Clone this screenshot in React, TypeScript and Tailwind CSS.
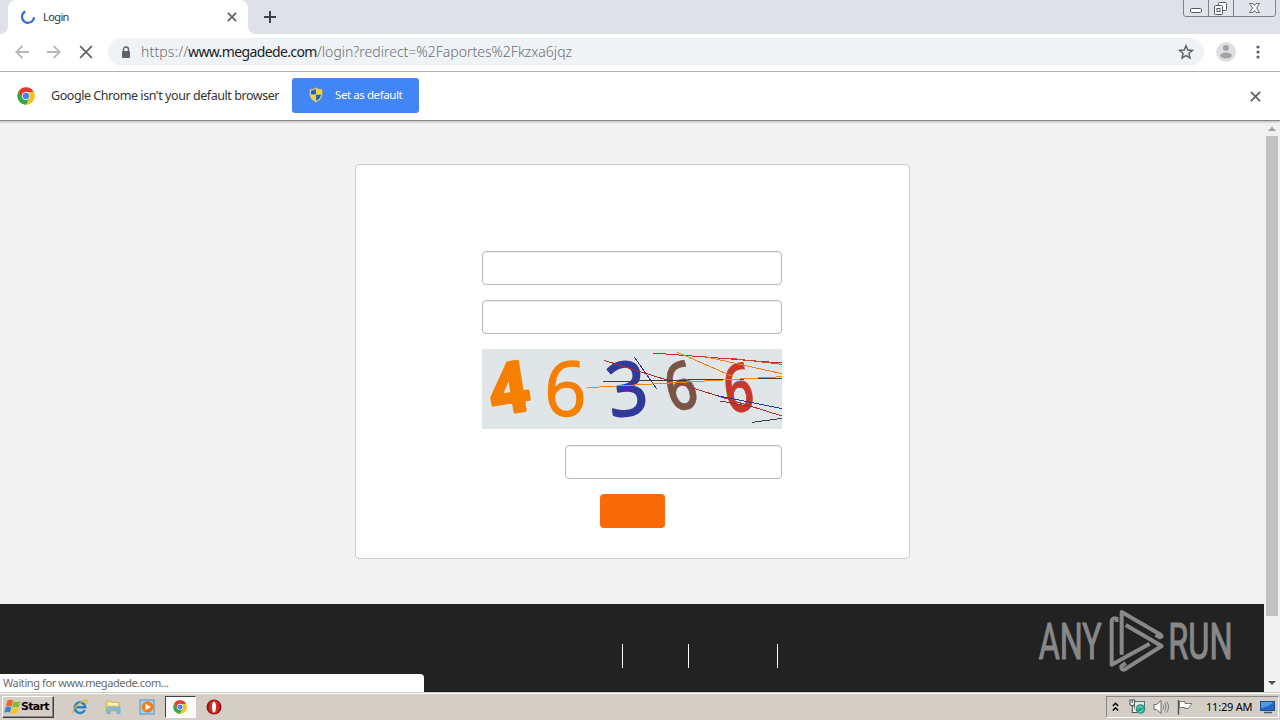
import type { ReactNode } from "react";

const uiFont = "font-['Noto_Sans','Open_Sans',sans-serif]";

const ChromeLogo = ({ size }: { size: number }) => (
    <svg width={size} height={size} viewBox="0 0 48 48">
        <circle cx="24" cy="24" r="23" fill="#fbc116" />
        <path d="M4.1 12.5 A23 23 0 0 0 24 47 L34 29.2 L24 24 L14 29.2 Z" fill="#2da94f" />
        <path d="M24 13.5 H44.5 A23 23 0 0 1 24 47 L33.5 29.5 Z" fill="#fbc116" />
        <path d="M24 13.5 H44.5 A23 23 0 0 0 4.1 12.5 L14.5 29 Z" fill="#e33b2e" />
        <circle cx="24" cy="24" r="10.8" fill="#fff" />
        <circle cx="24" cy="24" r="8.8" fill="#4a80f0" />
    </svg>
);

const Shield = () => (
    <svg width="14" height="16" viewBox="0 0 14 16">
        <path d="M7 .5 Q10 2.5 13.4 2.2 V7 Q13.4 12.5 7 15.5 Q.6 12.5 .6 7 V2.2 Q4 2.5 7 .5Z" fill="#d9d4b2" stroke="#8c8f72" strokeWidth=".7" />
        <path d="M6.9 2 Q4.5 3.6 2 3.6 V7.5 H6.9Z" fill="#1d62b8" />
        <path d="M7.1 2 Q9.5 3.6 12 3.6 V7.5 H7.1Z" fill="#f8d324" />
        <path d="M2 7.7 H6.9 V14 Q2.6 11.7 2 7.7Z" fill="#f8d324" />
        <path d="M12 7.7 H7.1 V14 Q11.4 11.7 12 7.7Z" fill="#1d62b8" />
    </svg>
);

const Cross = ({ size, color, width = 1.8 }: { size: number; color: string; width?: number }) => (
    <svg width={size} height={size} viewBox="0 0 12 12">
        <path d="M1 1 L11 11 M11 1 L1 11" stroke={color} strokeWidth={width} fill="none" />
    </svg>
);

const WindowControls = () => (
    <svg className="absolute right-1 top-0" width="93" height="17" viewBox="0 0 93 17">
        <path d="M.5 0 V14 Q.5 16.5 3 16.5 H90 Q92.5 16.5 92.5 14 V0 M25.5 0 V16.5 M50.5 0 V16.5" fill="#e1e4ea" stroke="#7d838c" />
        <rect x="7.5" y="8.5" width="11" height="4" rx="1" fill="#fff" stroke="#555b66" />
        <rect x="35.5" y="2.5" width="8" height="8" rx="1" fill="#fff" stroke="#555b66" />
        <rect x="31.5" y="5.5" width="8" height="9" rx="1" fill="#fff" stroke="#555b66" />
        <rect x="34" y="8.5" width="3" height="3" fill="#fff" stroke="#555b66" />
        <path d="M66.500 3.500 H70 L71.500 5.500 L73 3.500 H76.500 L73.500 8 L76.500 12.500 H73 L71.500 10.500 L70 12.500 H66.500 L69.500 8 Z" fill="#fff" stroke="#6b717b" />
    </svg>
);

const TabStrip = () => (
    <div className="relative flex h-[34px] shrink-0 items-end bg-[#dee1e7]">
        <div className="flex h-full w-2 items-end bg-white"><div className="h-full w-2 rounded-br-lg bg-[#dee1e7]" /></div>
        <div className="flex h-full w-60 items-center rounded-t-lg bg-white pl-[13px] pr-[11px]">
            <svg width="14" height="14" viewBox="0 0 14 14">
                <path d="M4.200 1.500 A6 6 0 1 0 13 7.200" fill="none" stroke="#2f69d9" strokeWidth="2.100" />
            </svg>
            <span className="ml-2 flex-1 text-[11px] tracking-[-0.6px] text-[#333]">Login</span>
            <Cross size={10} color="#5f6368" width={2} />
        </div>
        <div className="h-full w-2 bg-white"><div className="h-full w-2 rounded-bl-lg bg-[#dee1e7]" /></div>
        <svg className="mb-[11px] ml-2" width="12" height="12" viewBox="0 0 12 12">
            <path d="M6 0 V12 M0 6 H12" stroke="#3c4043" strokeWidth="2" />
        </svg>
        <WindowControls />
    </div>
);

const Toolbar = () => (
    <div className="flex h-[38px] shrink-0 items-center border-b border-[#b3b5b8] bg-white pb-px pl-[15px] pr-[19px]">
        <svg width="14" height="14" viewBox="0 0 14 14">
            <path d="M14 7 H1.500 M7.500 .8 L1.300 7 L7.500 13.200" fill="none" stroke="#b4b6b9" strokeWidth="1.800" />
        </svg>
        <svg className="ml-[18px]" width="14" height="14" viewBox="0 0 14 14">
            <path d="M0 7 H12.500 M6.500 .8 L12.700 7 L6.500 13.200" fill="none" stroke="#b4b6b9" strokeWidth="1.800" />
        </svg>
        <div className="ml-[18px]"><Cross size={14} color="#5f6368" width={1.500} /></div>
        <div className="ml-[15px] flex h-7 w-[1096px] items-center rounded-full bg-[#f0f3f6] pl-[13px] pr-[10px]">
            <svg width="10" height="13" viewBox="0 0 10 13">
                <path d="M2.500 6 V3.500 A2.500 2.500 0 0 1 7.500 3.500 V6" fill="none" stroke="#5f6368" strokeWidth="1.400" />
                <rect x="1" y="5" width="8" height="7" rx="1" fill="#5f6368" />
            </svg>
            <span className="mb-px ml-[10px] flex-1 whitespace-nowrap text-[14px] font-light text-[#6b6e72]">
                <span className="inline-block w-[47px] tracking-[0.15px]">https://</span>
                <span className="inline-block w-[129px] font-normal tracking-[-0.62px] text-[#202124]">www.megadede.com</span>
                <span>/login?redirect=%2Faportes%2Fkzxa6jqz</span>
            </span>
            <svg width="16" height="16" viewBox="0 0 16 16">
                <path d="M8 1.800 L9.800 6 L14.400 6.400 L10.900 9.400 L12 13.900 L8 11.500 L4 13.900 L5.100 9.400 L1.600 6.400 L6.200 6 Z" fill="none" stroke="#5f6368" strokeWidth="1.500" />
            </svg>
        </div>
        <svg className="ml-3" width="20" height="20" viewBox="0 0 20 20">
            <circle cx="10" cy="10" r="10" fill="#dedfe1" />
            <circle cx="10" cy="6" r="3" fill="#a0a2a5" />
            <ellipse cx="10" cy="13.500" rx="5.800" ry="2.900" fill="#a0a2a5" />
        </svg>
        <svg className="ml-5" width="4" height="14" viewBox="0 0 4 14">
            <circle cx="2" cy="2" r="1.600" fill="#5f6368" />
            <circle cx="2" cy="7" r="1.600" fill="#5f6368" />
            <circle cx="2" cy="12" r="1.600" fill="#5f6368" />
        </svg>
    </div>
);

const InfoBar = () => (
    <div className="z-10 flex h-[49px] shrink-0 items-center border-b border-[#898989] bg-white pl-[17px] pr-[19px] shadow-[0_1px_2px_rgba(0,0,0,0.25)]">
        <ChromeLogo size={18} />
        <span className="ml-4 w-[241px] whitespace-nowrap text-[12.500px] tracking-[-0.44px] text-[#333]">Google Chrome isn't your default browser</span>
        <button className="mb-0.5 flex h-[35px] w-[127px] items-center rounded-[3px] bg-[#4285f4] pl-[17px] text-white">
            <Shield />
            <span className="ml-3 whitespace-nowrap text-[11.500px] tracking-[-0.42px]">Set as default</span>
        </button>
        <div className="ml-auto"><Cross size={11} color="#5f6368" width={2} /></div>
    </div>
);

const digits = [
    { char: "4", font: "'Open Sans', sans-serif", color: "#f77f00", x: 113, y: 217, size: 208, rotate: -9, sx: 0.98, weight: 700, stroke: 10 },
    { char: "6", font: "'Open Sans', sans-serif", color: "#f77f00", x: 271, y: 228, size: 226, rotate: 0, sx: 0.98, weight: 400, stroke: 4 },
    { char: "3", font: "'Open Sans', sans-serif", color: "#303a9c", x: 467, y: 224, size: 222, rotate: -8, sx: 0.94, weight: 400, stroke: 7 },
    { char: "6", font: "'Open Sans', sans-serif", color: "#795548", x: 635, y: 207, size: 200, rotate: -15, sx: 0.8, weight: 600, stroke: 2 },
    { char: "6", font: "'Open Sans', sans-serif", color: "#c9372c", x: 803, y: 214, size: 200, rotate: -11, sx: 0.75, weight: 600, stroke: 3 },
];

const strikes = [
    { d: "M387 61 L921 228", color: "#b32d2d" },
    { d: "M478 51 L545 147", color: "#2b3486" },
    { d: "M385 124.500 L921 115", color: "#4b3b34" },
    { d: "M337 143 L921 110", color: "#f0851a" },
    { d: "M534 39 L921 69", color: "#bd2f2b" },
    { d: "M760 54 L921 73", color: "#cb4c1e" },
    { d: "M607 37 L775 110", color: "#ee801a" },
    { d: "M690 50 L921 101", color: "#ee801a" },
    { d: "M722 166 L921 206", color: "#2539a0" },
    { d: "M736 183 L835 201", color: "#7c3430" },
    { d: "M832 247 L921 235", color: "#3c4247" },
];

const Captcha = () => (
    <svg className="mt-[15px] block overflow-visible bg-[#e0e6e8]" width="300" height="80" viewBox="21 27 900 240">
        {digits.map((d, idx) => (
            <text
                key={idx}
                transform={`translate(${d.x} ${d.y}) rotate(${d.rotate}) scale(${d.sx} 1)`}
                textAnchor="middle"
                fontFamily={d.font}
                fontSize={d.size}
                fontWeight={d.weight}
                fill={d.color}
                stroke={d.color}
                strokeWidth={d.stroke}
                strokeLinejoin="round"
            >
                {d.char}
            </text>
        ))}
        {strikes.map((s) => (
            <path key={s.d} d={s.d} stroke={s.color} strokeWidth="3" shapeRendering="crispEdges" />
        ))}
    </svg>
);

const field = "block h-[34px] rounded-[4px] border border-[#b9b9b9] bg-white px-3 shadow-[inset_0_1px_1px_rgba(0,0,0,0.075)] outline-none";

const LoginCard = () => (
    <form className="mx-auto h-[395px] w-[555px] rounded-[4px] border border-[#ccc] bg-white pl-[126px] pt-[86px]">
        <div className="w-[300px]">
            <input className={`${field} w-full`} />
            <input type="password" className={`${field} mt-[15px] w-full`} />
            <Captcha />
            <input className={`${field} ml-auto mt-4 w-[217px]`} />
            <button type="button" className="ml-[118px] mt-[15px] block h-[34px] w-[65px] rounded-[4px] bg-[#fb6a08]" />
        </div>
    </form>
);

const AnyRun = () => (
    <svg className="absolute right-[47px] top-[486px] overflow-visible" width="200" height="68" viewBox="40 35 600 204">
        <g fill="#888" stroke="#888" strokeWidth="3.500" fontFamily="Roboto, sans-serif" fontSize="152">
            <text x="57" y="192" textLength="189" lengthAdjust="spacingAndGlyphs">ANY</text>
            <text x="446" y="192" textLength="193" lengthAdjust="spacingAndGlyphs">RUN</text>
        </g>
        <g fill="none" stroke="#888" strokeWidth="12" strokeLinejoin="round">
            <path d="M306 178 V50 L423 118 Q430 124 421 126 L408 119" />
            <path d="M318 89 L426 152 L314 223 Q303 224 305 213 L318 203" />
            <path d="M291 80 V70 Q277 66 276 78 V208 L390 145" />
        </g>
    </svg>
);

const Page = () => (
    <main className="relative flex min-h-0 flex-1 bg-[#f2f2f2]">
        <div className="flex w-[1264px] flex-col pt-[43px]">
            <LoginCard />
            <footer className="mt-auto flex h-[88px] justify-center bg-[#222] pt-10">
                <div className="ml-[136px] flex h-6 w-[156px] border-x border-white">
                    <div className="w-[66px] border-r border-white" />
                </div>
            </footer>
        </div>
        <div className="flex w-4 flex-col items-center bg-[#f1f1f1]">
            <svg width="16" height="15" viewBox="0 0 16 15"><path d="M4 10 L8 5.500 L12 10Z" fill="#a3a3a3" /></svg>
            <div className="h-[480px] w-3 bg-[#c1c1c1]" />
            <svg className="mt-auto" width="16" height="17" viewBox="0 0 16 17"><path d="M4 6 H12 L8 10Z" fill="#505050" /></svg>
        </div>
        <AnyRun />
        <div className="absolute bottom-0 left-0 flex h-[18px] w-[424px] items-center rounded-tr-[4px] bg-white pl-[3px] text-[11px] tracking-[-0.4px] text-[#6b6b6b]">
            Waiting for www.megadede.com...
        </div>
    </main>
);

const TaskItem = ({ active, children }: { active?: boolean; children: ReactNode }) => (
    <div className={`flex h-[22px] w-[31px] items-center justify-center ${active ? "border border-b-white border-l-[#404040] border-r-white border-t-[#404040] bg-[#fafafa]" : ""}`}>
        {children}
    </div>
);

const Taskbar = () => (
    <div className="flex h-7 shrink-0 items-center border-t border-[#c8cac4] bg-[#d5cec7] pt-px shadow-[inset_0_1px_0_#fff]">
        <button className="ml-[2px] flex h-[22px] w-[52px] items-center border border-b-[#404040] border-l-white border-r-[#404040] border-t-white bg-[#d5cec7] pl-px shadow-[inset_-1px_-1px_0_#888]">
            <svg className="shrink-0" width="17" height="16" viewBox="0 0 17 16">
                <path d="M3.500 1.500 Q6.300 0 9 1.700 L7.600 7.300 Q4.500 6 1.800 7.500Z" fill="#ed6328" />
                <path d="M9.600 2.200 Q13 4 16.500 2 L15 7.700 Q11.500 9 8.200 7.700Z" fill="#86ba38" />
                <path d="M1.600 8.200 Q4.500 6.700 7.400 8 L6 13.600 Q3.300 12.200 .2 13.700Z" fill="#3c82cd" />
                <path d="M8 8.500 Q11 10 14.800 8.400 L13.300 14 Q9.700 15.700 6.600 14Z" fill="#f9c51d" />
            </svg>
            <span className="font-['DejaVu_Sans',sans-serif] text-[11px] font-bold tracking-[-0.7px] text-black">Start</span>
        </button>
        <div className="ml-[10px] flex gap-[2.6px]">
            <TaskItem>
                <svg width="16" height="16" viewBox="0 0 16 16">
                    <path d="M12.800 11 A5.300 5.300 0 1 1 13.300 8.300 H4" fill="none" stroke="#2186d1" strokeWidth="2.600" />
                    <path d="M1.500 14.500 Q-.5 11 6 5.500 Q13 .2 15 1.600 Q15.800 2.500 14.200 5" fill="none" stroke="#e8b62b" strokeWidth="1.300" />
                </svg>
            </TaskItem>
            <TaskItem>
                <svg width="16" height="16" viewBox="0 0 16 16">
                    <path d="M1 2 H6 L7.500 3.500 H14 V12 H1Z" fill="#f2d779" stroke="#c9a547" strokeWidth=".7" />
                    <path d="M3 5 H13" stroke="#fff6c7" strokeWidth="2" />
                    <path d="M2 8 H15 V14.500 H12 V11 H5 V14.500 H2Z" fill="#82bfe2" stroke="#609bbd" strokeWidth=".6" />
                </svg>
            </TaskItem>
            <TaskItem>
                <svg width="16" height="16" viewBox="0 0 16 16">
                    <rect x="1" y="1" width="14" height="14" fill="#a9d2f2" stroke="#4b94cd" />
                    <circle cx="8.500" cy="8" r="5.800" fill="#f27c0c" />
                    <path d="M6.500 4.800 L12 8 L6.500 11.200Z" fill="#fff" />
                </svg>
            </TaskItem>
            <TaskItem active><ChromeLogo size={14} /></TaskItem>
            <TaskItem>
                <svg width="16" height="16" viewBox="0 0 16 16">
                    <circle cx="8" cy="8" r="7.500" fill="#8e1010" />
                    <ellipse cx="8" cy="8" rx="5.500" ry="6.800" fill="#d52b25" />
                    <ellipse cx="8" cy="8" rx="2" ry="5.500" fill="#fff" />
                </svg>
            </TaskItem>
        </div>
        <div className="ml-auto mr-px flex h-[22px] w-[173px] items-center border border-b-white border-l-[#888] border-r-white border-t-[#888] pl-[5px]">
            <svg width="7" height="10" viewBox="0 0 7 10"><path d="M.8 4 L3.500 1.300 L6.200 4 M.8 8.500 L3.500 5.800 L6.200 8.500" fill="none" stroke="#000" strokeWidth="1.400" /></svg>
            <svg className="ml-[10px]" width="17" height="16" viewBox="0 0 17 16">
                <rect x="5.500" y="2.500" width="10" height="9" fill="#dfe9e5" stroke="#54716c" />
                <path d="M1 1 H5.500 V5 Q5.500 6.500 3.300 6.500 Q1 6.500 1 5Z M3.300 1 V4 M3.300 6.500 V13.500 H8" fill="#fff" stroke="#4d5955" strokeWidth="1.100" />
                <circle cx="11.500" cy="10" r="4.800" fill="#2b9c8b" />
                <path d="M8 9.500 Q11 6 14 8.500 M10 13 Q13.500 13 14.500 10" fill="none" stroke="#a1d9c8" />
            </svg>
            <svg className="ml-[7px]" width="17" height="16" viewBox="0 0 17 16">
                <path d="M1 5.500 H3.500 L8 1.500 V14.500 L3.500 10.500 H1Z" fill="#fff" stroke="#686868" />
                <path d="M10 5.500 Q11.800 8 10 10.500 M11.800 3.800 Q14.500 8 11.800 12.200 M13.600 2.300 Q17.500 8 13.600 13.700" fill="none" stroke="#777" strokeWidth=".9" />
            </svg>
            <svg className="ml-[7px]" width="17" height="16" viewBox="0 0 17 16">
                <path d="M1.500 1 V15.500" stroke="#555" strokeWidth="1.500" />
                <path d="M2.500 2.500 H8 V4.500 H15 L13 7 L11.500 9.500 H7.500 V8.500 H2.500Z" fill="#fff" stroke="#777" />
            </svg>
            <span className="ml-3 w-[51px] whitespace-nowrap text-[11px] tracking-[-0.2px] text-black">11:29 AM</span>
            <svg className="ml-[3px] shrink-0" width="15" height="14" viewBox="0 0 15 14">
                <rect x=".5" y="1.500" width="14" height="9" fill="#2467bd" stroke="#244c88" />
                <path d="M1 2 H13 Q9 7 1 8Z" fill="#4f9be6" />
                <path d="M4 12.500 H12" stroke="#4a596d" strokeWidth="1.500" />
            </svg>
        </div>
    </div>
);

export default function App() {
    return (
        <div className={`flex h-[720px] w-[1280px] flex-col overflow-hidden bg-white ${uiFont}`}>
            <TabStrip />
            <Toolbar />
            <InfoBar />
            <Page />
            <Taskbar />
        </div>
    );
}
